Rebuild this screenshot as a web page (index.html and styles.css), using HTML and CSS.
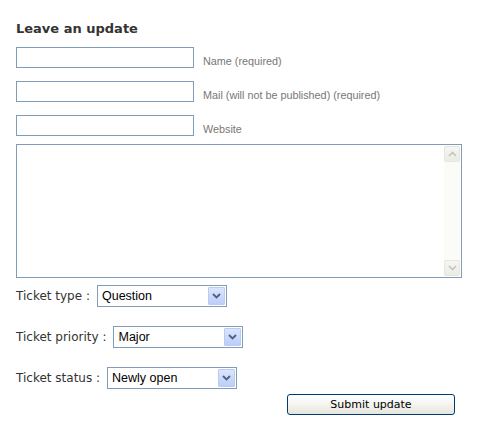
FILE: index.html
```html
<!DOCTYPE html>
<html>
<head>
<meta charset="utf-8">
<link rel="stylesheet" href="styles.css">
</head>
<body>
<form class="form">
  <h2 class="title">Leave an update</h2>
  <div class="field-row">
    <input class="text-input" type="text">
    <label class="hint">Name (required)</label>
  </div>
  <div class="field-row">
    <input class="text-input" type="text">
    <label class="hint">Mail (will not be published) (required)</label>
  </div>
  <div class="field-row">
    <input class="text-input" type="text">
    <label class="hint">Website</label>
  </div>
  <div class="textarea-box">
    <textarea class="textarea"></textarea>
    <div class="scrollbar">
      <div class="scroll-btn">
        <svg width="9" height="6" viewBox="0 0 9 6"><path d="M1 5 L4.5 1.5 L8 5" fill="none" stroke="#c4c4bc" stroke-width="1.6"/></svg>
      </div>
      <div class="scroll-track"></div>
      <div class="scroll-btn">
        <svg width="9" height="6" viewBox="0 0 9 6"><path d="M1 1 L4.5 4.5 L8 1" fill="none" stroke="#c4c4bc" stroke-width="1.6"/></svg>
      </div>
    </div>
  </div>
  <div class="select-row first">
    <span class="sel-label">Ticket type :</span>
    <div class="select"><span class="sel-value">Question</span><span class="sel-arrow"><svg width="9" height="6" viewBox="0 0 9 6"><path d="M1 1 L4.5 4.5 L8 1" fill="none" stroke="#4d6185" stroke-width="1.8"/></svg></span></div>
  </div>
  <div class="select-row">
    <span class="sel-label">Ticket priority :</span>
    <div class="select"><span class="sel-value">Major</span><span class="sel-arrow"><svg width="9" height="6" viewBox="0 0 9 6"><path d="M1 1 L4.5 4.5 L8 1" fill="none" stroke="#4d6185" stroke-width="1.8"/></svg></span></div>
  </div>
  <div class="select-row">
    <span class="sel-label">Ticket status :</span>
    <div class="select"><span class="sel-value">Newly open</span><span class="sel-arrow"><svg width="9" height="6" viewBox="0 0 9 6"><path d="M1 1 L4.5 4.5 L8 1" fill="none" stroke="#4d6185" stroke-width="1.8"/></svg></span></div>
  </div>
  <div class="submit-row">
    <button class="submit" type="button">Submit update</button>
  </div>
</form>
</body>
</html>
```

FILE: styles.css
```css
html, body {
  margin: 0;
  padding: 0;
  background: #ffffff;
}
.form {
  display: flex;
  flex-direction: column;
  width: 446px;
  padding-left: 16px;
  font-family: "DejaVu Sans", Verdana, sans-serif;
}
.title {
  margin: 20px 0 10px 0;
  font-size: 13px;
  line-height: 17px;
  font-weight: bold;
  color: #333333;
}
.field-row {
  display: flex;
  align-items: flex-end;
  margin-bottom: 13px;
}
.field-row:nth-of-type(3) {
  margin-bottom: 0;
}
.text-input {
  box-sizing: border-box;
  width: 178px;
  height: 21px;
  margin: 0;
  border: 1px solid #7f9db9;
  background: #ffffff;
  padding: 2px;
}
.hint {
  margin-left: 9px;
  margin-bottom: 1px;
  font-family: "Liberation Sans", Arial, sans-serif;
  font-size: 10.8px;
  line-height: 11px;
  color: #777777;
}
.textarea-box {
  display: flex;
  box-sizing: border-box;
  width: 446px;
  height: 134px;
  margin-top: 8px;
  border: 1px solid #7f9db9;
  background: #ffffff;
}
.textarea {
  flex: 1;
  border: none;
  margin: 0;
  padding: 2px;
  resize: none;
  outline: none;
  overflow: hidden;
}
.scrollbar {
  display: flex;
  flex-direction: column;
  width: 16px;
  margin: 1px 1px 1px 0;
  background: #fbfbf7;
}
.scroll-btn {
  box-sizing: border-box;
  height: 16px;
  display: flex;
  align-items: center;
  justify-content: center;
  border: 1px solid #e6e6df;
  border-radius: 2px;
  background: linear-gradient(#f6f6f2, #ecece6);
}
.scroll-track {
  flex: 1;
}
.select-row {
  display: flex;
  align-items: center;
  margin-top: 19px;
}
.select-row.first {
  margin-top: 7px;
}
.sel-label {
  font-size: 12px;
  line-height: 14px;
  color: #333333;
  margin-right: 7px;
}
.select {
  box-sizing: border-box;
  display: flex;
  align-items: center;
  width: 130px;
  height: 22px;
  border: 1px solid #7f9db9;
  background: #ffffff;
  padding: 1px;
}
.sel-value {
  flex: 1;
  padding-left: 3px;
  font-family: "Liberation Sans", Arial, sans-serif;
  font-size: 12.5px;
  color: #000000;
}
.sel-arrow {
  box-sizing: border-box;
  width: 17px;
  height: 18px;
  display: flex;
  align-items: center;
  justify-content: center;
  border: 1px solid #b9cbf3;
  border-radius: 1px;
  background: linear-gradient(#dbe5fd, #bccdf8);
}
.submit-row {
  display: flex;
  justify-content: flex-end;
  margin-top: 5px;
  margin-right: 7px;
}
.submit {
  box-sizing: border-box;
  width: 168px;
  height: 21px;
  margin: 0;
  padding: 0;
  border: 1px solid #003c74;
  border-radius: 3px;
  background: linear-gradient(#ffffff 0%, #f4f4f0 50%, #e6e4dc 100%);
  font-family: "DejaVu Sans", Verdana, sans-serif;
  font-size: 11px;
  color: #000000;
}
```
